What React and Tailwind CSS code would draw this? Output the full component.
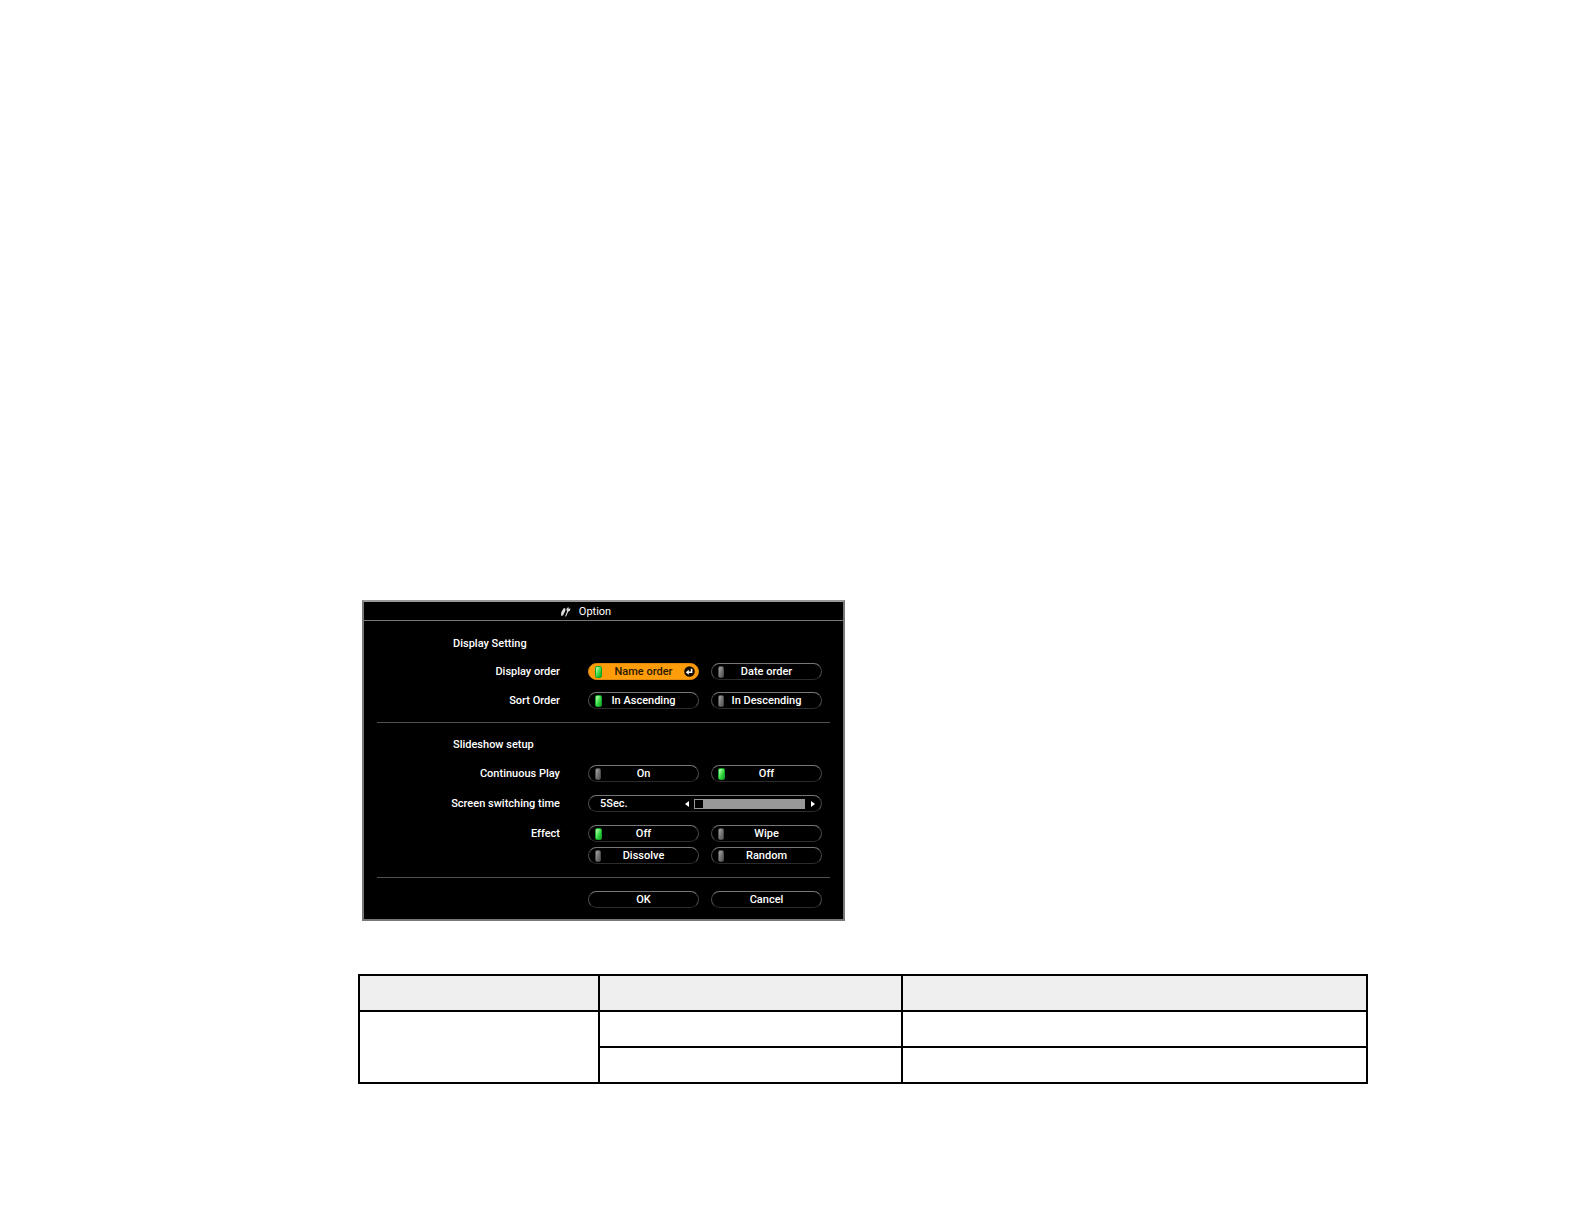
const pill =
  "flex h-[17px] w-full items-center rounded-full border border-x-[#4a4a4a] border-t-[#777] border-b-[#2c2c2c] bg-black";

function Lamp({ on }) {
  return (
    <span
      aria-hidden="true"
      className={
        on
          ? "h-[12px] w-[7px] shrink-0 rounded-[2px] border border-[#14a32c] bg-linear-to-br from-[#c4ffc0] via-[#3fe04a] to-[#0aa51e]"
          : "h-[12px] w-[6px] shrink-0 rounded-[2px] border border-[#4c4c4c] bg-linear-to-br from-[#aaa] via-[#777] to-[#555]"
      }
    />
  );
}

function EnterIcon() {
  return (
    <svg aria-hidden="true" viewBox="0 0 11 11" className="size-[11px] shrink-0">
      <circle cx="5.5" cy="5.5" r="5.3" fill="#120c00" />
      <path d="M7.6 2.8V6.3H4.4" fill="none" stroke="#fff" strokeWidth="1.6" />
      <path d="M4.8 3.8V8.8L1.8 6.3Z" fill="#fff" />
    </svg>
  );
}

function Choice({ name, label, checked, focused }) {
  return (
    <label
      className={
        focused
          ? "flex h-[17px] w-full cursor-pointer items-center rounded-full border border-[#e08a10] bg-[#ff9c0a] pr-[3px] pl-[6px] text-[#2a1800]"
          : `${pill} cursor-pointer pr-[3px] pl-[6px] text-white`
      }
    >
      <input type="radio" name={name} defaultChecked={checked} className="sr-only" />
      <span className="flex w-[11px] shrink-0">
        <Lamp on={checked} />
      </span>
      <span className="flex-1 pr-[3px] text-center">{label}</span>
      <span className="flex w-[11px] shrink-0 justify-end">{focused && <EnterIcon />}</span>
    </label>
  );
}

function Row({ label, children }) {
  return (
    <div role="group" aria-label={label} className="flex gap-7">
      <div className="h-[17px] w-[196px] shrink-0 text-right">{label}</div>
      <div className="grid flex-1 grid-cols-2 gap-x-3 gap-y-[5px]">{children}</div>
    </div>
  );
}

function SwitchingTime() {
  return (
    <div className="flex gap-7">
      <label htmlFor="switching-time" className="h-[17px] w-[196px] shrink-0 text-right">
        Screen switching time
      </label>
      <div className="min-w-0 flex-1">
        <div className={`${pill} pr-[6px] pl-[11px]`}>
          <span className="flex-1">5Sec.</span>
          <button type="button" aria-label="Shorter" className="flex w-[5px] justify-center">
            <svg viewBox="0 0 4 6" className="h-[6px] w-[4px]">
              <path d="M4 0V6L0 3Z" fill="#fff" />
            </svg>
          </button>
          <input
            id="switching-time"
            type="range"
            min="5"
            max="60"
            defaultValue="5"
            className="mx-[5px] h-[10px] w-[111px] appearance-none border border-[#999] bg-[#999] [&::-webkit-slider-thumb]:h-[8px] [&::-webkit-slider-thumb]:w-[8px] [&::-webkit-slider-thumb]:appearance-none [&::-webkit-slider-thumb]:bg-black"
          />
          <button type="button" aria-label="Longer" className="flex w-[5px] justify-center">
            <svg viewBox="0 0 4 6" className="h-[6px] w-[4px]">
              <path d="M0 0V6L4 3Z" fill="#fff" />
            </svg>
          </button>
        </div>
      </div>
    </div>
  );
}

function OptionDialog() {
  return (
    <form className="ml-1 max-w-[483px] border-2 border-[#777] border-t-[#999] bg-black font-['Roboto',sans-serif] text-[11px] leading-[17px] font-medium text-white">
      <h1 className="flex h-[19px] items-center justify-center gap-2 border-b border-[#777] pr-[36px] font-normal">
        <svg aria-hidden="true" viewBox="0 0 11 11" className="size-[11px]">
          <path d="M3.4 2.6 5.2 2 5.4 4.6 3 9.4 1 9.8 1.2 6.6Z" fill="#ddd" />
          <path d="M5 10.4 7 5.4 6.4 3 8.4.8 8.6 2.8 10.6 2.4 9.8 4.8 8.2 5.8 6.2 10.2Z" fill="#ddd" />
        </svg>
        Option
      </h1>
      <div className="pt-[14px] pr-[21px]">
        <h2 className="pl-[89px]">Display Setting</h2>
        <div className="mt-[11px] flex flex-col gap-3">
          <Row label="Display order">
            <Choice name="display" label="Name order" checked focused />
            <Choice name="display" label="Date order" />
          </Row>
          <Row label="Sort Order">
            <Choice name="sort" label="In Ascending" checked />
            <Choice name="sort" label="In Descending" />
          </Row>
        </div>
      </div>
      <hr className="mx-[13px] mt-[13px] border-[#505050]" />
      <div className="pt-[13px] pr-[21px]">
        <h2 className="pl-[89px]">Slideshow setup</h2>
        <div className="mt-3 flex flex-col gap-[13px]">
          <Row label="Continuous Play">
            <Choice name="continuous" label="On" />
            <Choice name="continuous" label="Off" checked />
          </Row>
          <SwitchingTime />
          <Row label="Effect">
            <Choice name="effect" label="Off" checked />
            <Choice name="effect" label="Wipe" />
            <Choice name="effect" label="Dissolve" />
            <Choice name="effect" label="Random" />
          </Row>
        </div>
      </div>
      <hr className="mx-[13px] mt-[13px] border-[#505050]" />
      <div className="grid grid-cols-2 gap-3 pt-[13px] pr-[21px] pb-[11px] pl-[224px]">
        <button type="button" className={`${pill} justify-center`}>OK</button>
        <button type="button" className={`${pill} justify-center`}>Cancel</button>
      </div>
    </form>
  );
}

const cell = "h-9 border-2 border-black";

export default function App() {
  return (
    <main className="min-h-screen bg-white pt-[600px] pr-[216px] pb-[100px] pl-[358px]">
      <OptionDialog />
      <table className="mt-[53px] w-full table-fixed border-collapse">
        <colgroup>
          <col className="w-[240px]" />
          <col className="w-[303px]" />
          <col />
        </colgroup>
        <thead>
          <tr className="bg-[#efefef]">
            <th className={cell} />
            <th className={cell} />
            <th className={cell} />
          </tr>
        </thead>
        <tbody>
          <tr>
            <td rowSpan={2} className={cell} />
            <td className={cell} />
            <td className={cell} />
          </tr>
          <tr>
            <td className={cell} />
            <td className={cell} />
          </tr>
        </tbody>
      </table>
    </main>
  );
}
